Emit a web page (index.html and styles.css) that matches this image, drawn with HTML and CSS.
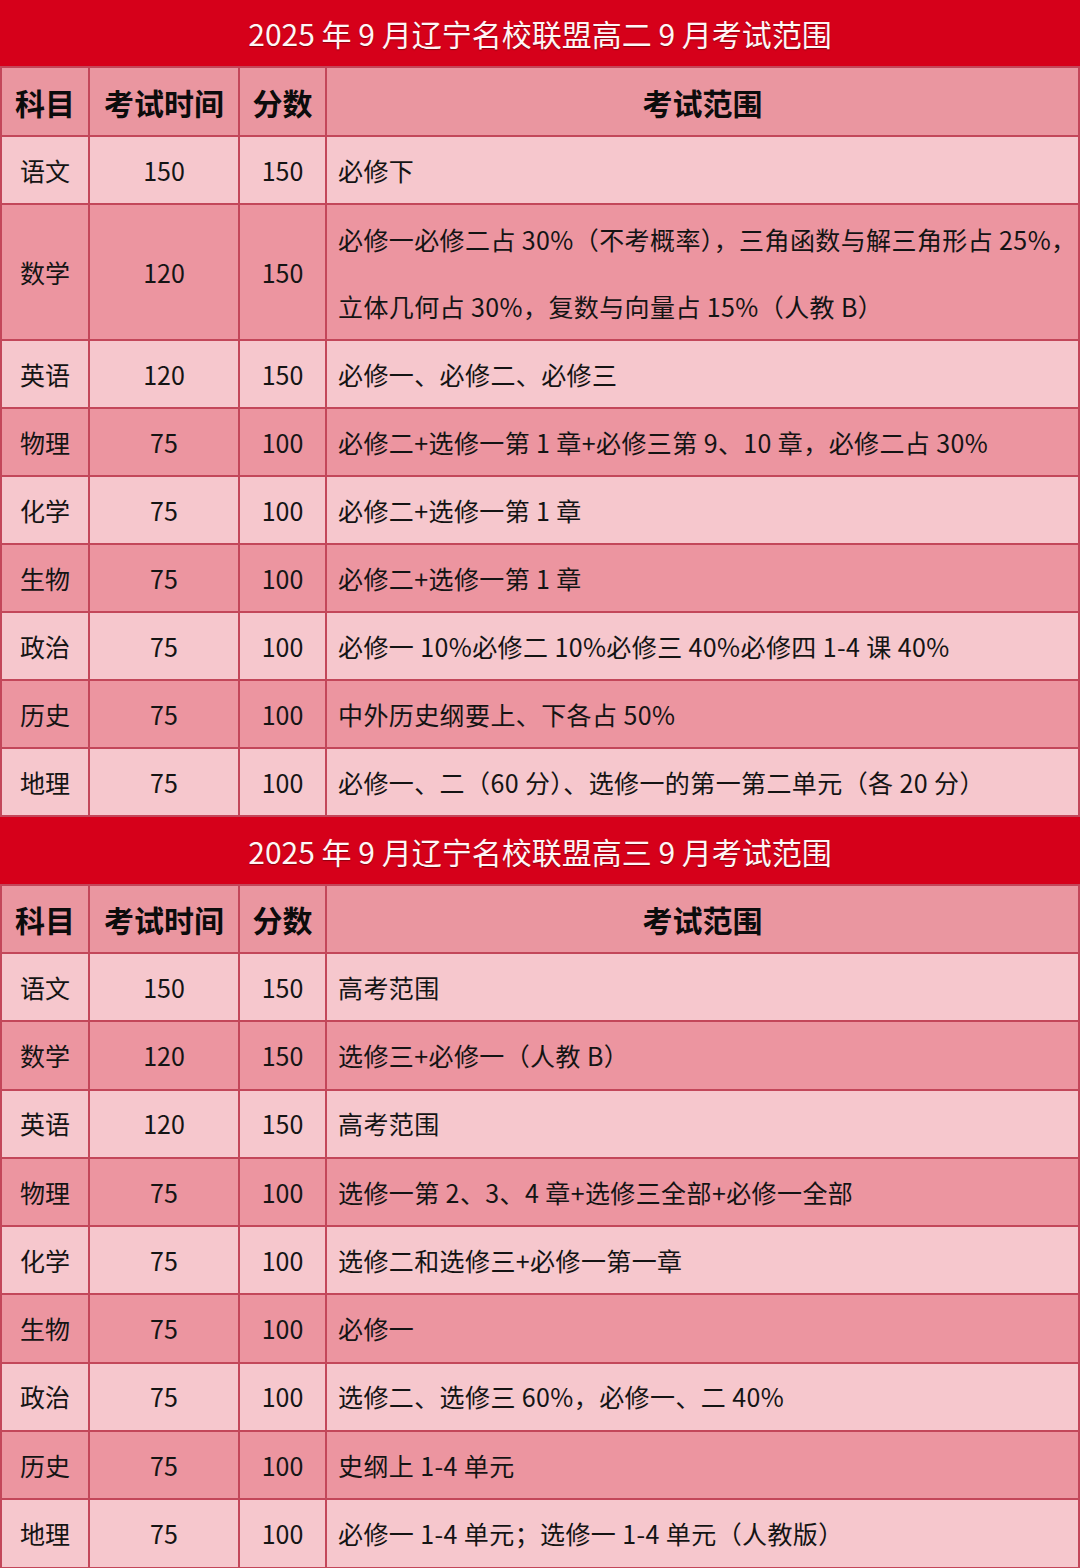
FILE: index.html
```html
<!DOCTYPE html>
<html lang="zh-CN">
<head>
<meta charset="utf-8">
<title>2025年9月辽宁名校联盟考试范围</title>
<link rel="stylesheet" href="styles.css">
</head>
<body>
<section class="sheet">
  <div class="title">2025 年 9 月辽宁名校联盟高二 9 月考试范围</div>
  <div class="cell head">科目</div><div class="cell head">考试时间</div><div class="cell head">分数</div><div class="cell head">考试范围</div>

  <div class="cell light">语文</div><div class="cell light">150</div><div class="cell light">150</div><div class="cell light scope">必修下</div>
  <div class="cell dark tall">数学</div><div class="cell dark tall">120</div><div class="cell dark tall">150</div><div class="cell dark scope tall multi">必修一必修二占 30%（不考概率），三角函数与解三角形占 25%，<br>立体几何占 30%，复数与向量占 15%（人教 B）</div>
  <div class="cell light">英语</div><div class="cell light">120</div><div class="cell light">150</div><div class="cell light scope">必修一、必修二、必修三</div>
  <div class="cell dark">物理</div><div class="cell dark">75</div><div class="cell dark">100</div><div class="cell dark scope">必修二+选修一第 1 章+必修三第 9、10 章，必修二占 30%</div>
  <div class="cell light">化学</div><div class="cell light">75</div><div class="cell light">100</div><div class="cell light scope">必修二+选修一第 1 章</div>
  <div class="cell dark">生物</div><div class="cell dark">75</div><div class="cell dark">100</div><div class="cell dark scope">必修二+选修一第 1 章</div>
  <div class="cell light">政治</div><div class="cell light">75</div><div class="cell light">100</div><div class="cell light scope">必修一 10%必修二 10%必修三 40%必修四 1-4 课 40%</div>
  <div class="cell dark">历史</div><div class="cell dark">75</div><div class="cell dark">100</div><div class="cell dark scope">中外历史纲要上、下各占 50%</div>
  <div class="cell light">地理</div><div class="cell light">75</div><div class="cell light">100</div><div class="cell light scope">必修一、二（60 分）、选修一的第一第二单元（各 20 分）</div>
</section>
<section class="sheet second">
  <div class="title">2025 年 9 月辽宁名校联盟高三 9 月考试范围</div>
  <div class="cell head">科目</div><div class="cell head">考试时间</div><div class="cell head">分数</div><div class="cell head">考试范围</div>

  <div class="cell light">语文</div><div class="cell light">150</div><div class="cell light">150</div><div class="cell light scope">高考范围</div>
  <div class="cell dark">数学</div><div class="cell dark">120</div><div class="cell dark">150</div><div class="cell dark scope">选修三+必修一（人教 B）</div>
  <div class="cell light">英语</div><div class="cell light">120</div><div class="cell light">150</div><div class="cell light scope">高考范围</div>
  <div class="cell dark">物理</div><div class="cell dark">75</div><div class="cell dark">100</div><div class="cell dark scope">选修一第 2、3、4 章+选修三全部+必修一全部</div>
  <div class="cell light">化学</div><div class="cell light">75</div><div class="cell light">100</div><div class="cell light scope">选修二和选修三+必修一第一章</div>
  <div class="cell dark">生物</div><div class="cell dark">75</div><div class="cell dark">100</div><div class="cell dark scope">必修一</div>
  <div class="cell light">政治</div><div class="cell light">75</div><div class="cell light">100</div><div class="cell light scope">选修二、选修三 60%，必修一、二 40%</div>
  <div class="cell dark">历史</div><div class="cell dark">75</div><div class="cell dark">100</div><div class="cell dark scope">史纲上 1-4 单元</div>
  <div class="cell light">地理</div><div class="cell light">75</div><div class="cell light">100</div><div class="cell light scope">必修一 1-4 单元；选修一 1-4 单元（人教版）</div>
</section>
</body>
</html>
```
FILE: styles.css
```css
html, body {
  margin: 0;
  padding: 0;
  background: #c3475a;
}
body {
  width: 1080px;
  font-family: "Noto Sans CJK SC", "Noto Sans", sans-serif;
  color: #141414;
}
.sheet {
  display: grid;
  grid-template-columns: 86px 148px 85px 1fr;
  grid-template-rows: 66px 67px 66px 134px repeat(7, 66px);
  gap: 2px;
  padding: 0 2px 2px 2px;
  background: #c3475a;
}
.sheet.second {
  grid-template-rows: 67px 66px repeat(9, 66.3px);
}
.title {
  grid-column: 1 / -1;
  margin: 0 -2px;
  background: #d6001a;
  color: #fff5f5;
  font-size: 30px;
  display: flex;
  align-items: center;
  justify-content: center;
  text-shadow: 0 1px 1px rgba(90, 0, 10, 0.6);
  letter-spacing: 0;
}
.cell {
  display: flex;
  align-items: center;
  justify-content: center;
  font-size: 25px;
  line-height: 1;
}
.head {
  background: #ea96a0;
  font-size: 30px;
  font-weight: 700;
  color: #0c0c0c;
}
.light {
  background: #f6c7cd;
}
.dark {
  background: #ec95a0;
}
.scope {
  justify-content: flex-start;
  padding-left: 11px;
  white-space: nowrap;
  letter-spacing: 0.4px;
}
.multi {
  line-height: 67px;
  padding-top: 1px;
}
```
